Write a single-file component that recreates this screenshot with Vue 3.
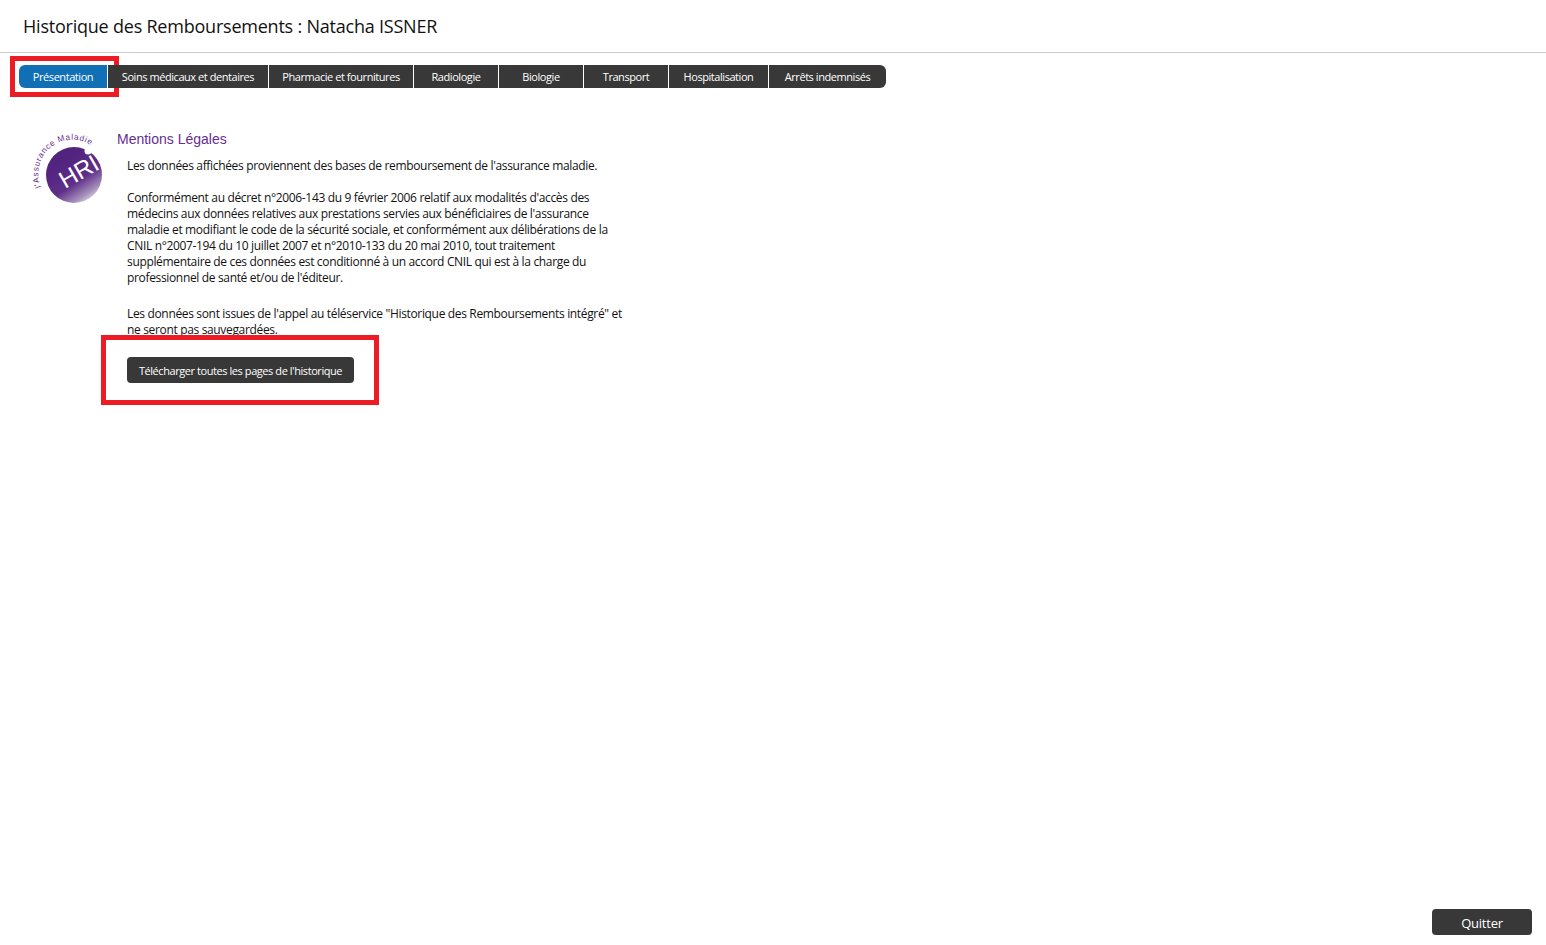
<script setup>
const tabs = [
  { label: "Présentation", width: 88, active: true },
  { label: "Soins médicaux et dentaires", width: 160 },
  { label: "Pharmacie et fournitures", width: 144 },
  { label: "Radiologie", width: 84 },
  { label: "Biologie", width: 84 },
  { label: "Transport", width: 84 },
  { label: "Hospitalisation", width: 99 },
  { label: "Arrêts indemnisés", width: 117 },
];
</script>

<template>
  <div class="page">
    <header class="page-header">
      <h1>Historique des Remboursements : Natacha ISSNER</h1>
    </header>

    <nav class="tabs">
      <div
        v-for="tab in tabs"
        :key="tab.label"
        class="tab"
        :class="{ active: tab.active }"
        :style="{ width: tab.width + 'px' }"
      >
        {{ tab.label }}
        <span v-if="tab.active" class="mark mark-tab"></span>
      </div>
    </nav>

    <main class="content">
      <svg class="logo" width="80" height="76" viewBox="0 0 80 76" aria-hidden="true">
        <defs>
          <linearGradient id="hri-fill" x1="0.3" y1="0.25" x2="0.8" y2="1">
            <stop offset="0" stop-color="#52237f" />
            <stop offset="0.5" stop-color="#5f3089" />
            <stop offset="0.8" stop-color="#a48fba" />
            <stop offset="1" stop-color="#eeeaf2" />
          </linearGradient>
          <path id="hri-arc" d="M13 56 A34 34 0 0 1 64 15" fill="none" />
        </defs>
        <circle cx="46" cy="44" r="28" fill="url(#hri-fill)" />
        <circle cx="60" cy="20" r="3.5" fill="#fff" />
        <text class="logo-arc">
          <textPath href="#hri-arc">l'Assurance Maladie</textPath>
        </text>
        <text class="logo-hri" transform="translate(37 58) rotate(-30)">HRI</text>
      </svg>

      <section class="legal">
        <h2>Mentions Légales</h2>
        <div class="legal-text">
          <p>Les données affichées proviennent des bases de remboursement de l'assurance maladie.</p>
          <p>
            Conformément au décret n°2006-143 du 9 février 2006 relatif aux modalités d'accès des<br>
            médecins aux données relatives aux prestations servies aux bénéficiaires de l'assurance<br>
            maladie et modifiant le code de la sécurité sociale, et conformément aux délibérations de la<br>
            CNIL n°2007-194 du 10 juillet 2007 et n°2010-133 du 20 mai 2010, tout traitement<br>
            supplémentaire de ces données est conditionné à un accord CNIL qui est à la charge du<br>
            professionnel de santé et/ou de l'éditeur.
          </p>
          <p class="last">
            Les données sont issues de l'appel au téléservice "Historique des Remboursements intégré" et<br>
            ne seront pas sauvegardées.
          </p>
          <button class="dark-btn download" type="button">
            Télécharger toutes les pages de l'historique
            <span class="mark mark-download"></span>
          </button>
        </div>
      </section>
    </main>

    <footer class="page-footer">
      <button class="dark-btn quit" type="button">Quitter</button>
    </footer>
  </div>
</template>

<style scoped>
.page {
  min-height: 945px;
  display: flex;
  flex-direction: column;
  font-family: "Open Sans", "Noto Sans", sans-serif;
  color: #111;
  background: #fff;
  box-sizing: border-box;
}

.page-header {
  height: 52px;
  border-bottom: 1px solid #ccc;
  padding-left: 23px;
  display: flex;
  align-items: center;
}

.page-header h1 {
  margin: 0;
  font-size: 18px;
  font-weight: 400;
  letter-spacing: -0.22px;
  color: #111;
}

.tabs {
  display: flex;
  margin: 12px 0 0 19px;
  gap: 1px;
}

.tab {
  position: relative;
  height: 23px;
  line-height: 23px;
  text-align: center;
  background: #383838;
  color: #fff;
  font-size: 11px;
  letter-spacing: -0.44px;
  white-space: nowrap;
}

.tab:first-child {
  border-radius: 6px 0 0 6px;
}

.tab:last-child {
  border-radius: 0 6px 6px 0;
}

.tab.active {
  background: #1170b5;
}

.mark {
  position: absolute;
  border: 5px solid #ed1c24;
  box-sizing: border-box;
}

.mark-tab {
  left: -9px;
  top: -9px;
  width: 109px;
  height: 41px;
}

.content {
  display: flex;
  margin-top: 43px;
  padding-left: 28px;
}

.logo {
  flex: none;
  overflow: visible;
}

.legal {
  margin-left: 9px;
}

.legal h2 {
  margin: 0;
  font-family: "Liberation Sans", Arial, sans-serif;
  font-size: 14px;
  font-weight: 400;
  line-height: 16px;
  color: #662d91;
}

.legal-text {
  margin: 11px 0 0 10px;
  font-size: 12px;
  line-height: 16px;
  letter-spacing: -0.34px;
  white-space: nowrap;
}

.legal-text p {
  margin: 0 0 16px;
}

.legal-text p.last {
  margin: 20px 0 0;
}

.dark-btn {
  border: none;
  background: #383838;
  color: #fff;
  font-family: inherit;
  padding: 0;
  display: block;
}

.download {
  position: relative;
  width: 227px;
  height: 26px;
  margin-top: 19px;
  border-radius: 4px;
  font-size: 11px;
  letter-spacing: -0.43px;
}

.mark-download {
  left: -26px;
  top: -22px;
  width: 278px;
  height: 70px;
}

.page-footer {
  margin-top: auto;
  padding: 0 14px 10px 0;
  display: flex;
  justify-content: flex-end;
}

.quit {
  width: 100px;
  height: 26px;
  padding-top: 2px;
  border-radius: 4px;
  font-size: 13px;
  letter-spacing: -0.25px;
}

.logo-arc {
  font-family: "Liberation Sans", Arial, sans-serif;
  font-size: 8.2px;
  letter-spacing: 0.7px;
  fill: #662d91;
}

.logo-hri {
  font-family: "Liberation Sans", Arial, sans-serif;
  font-size: 24px;
  fill: #fff;
}
</style>

<style>
body {
  background: #fff;
}
</style>
